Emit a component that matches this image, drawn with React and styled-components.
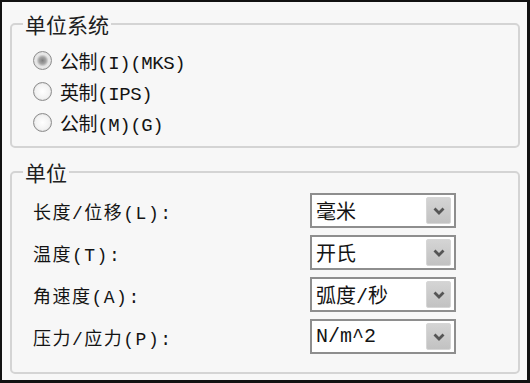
import React from "react";
import styled, { createGlobalStyle } from "styled-components";

const GlobalStyle = createGlobalStyle`
  html, body {
    margin: 0;
    padding: 0;
    background: #ffffff;
  }
`;

const Window = styled.div`
  box-sizing: border-box;
  width: 530px;
  height: 383px;
  border-style: solid;
  border-color: #111;
  border-width: 2px 3px 3px 2px;
  background: #f7f7f7;
  padding: 8px 7px 0 8px;
  display: flex;
  flex-direction: column;
  gap: 10px;
  font-family: "Liberation Mono", "Noto Sans CJK SC", monospace;
  color: #141414;
`;

const Group = styled.fieldset`
  box-sizing: border-box;
  margin: 0;
  height: ${(p) => p.$height}px;
  border: 2px solid #d4d4d4;
  border-radius: 5px;
  padding: ${(p) => p.$padTop}px 20px 0 21px;
  min-width: 0;
`;

const Legend = styled.legend`
  margin-left: -10px;
  padding: 0 2px;
  height: 28px;
  line-height: 28px;
  font-family: "Noto Sans CJK SC", sans-serif;
  font-size: 21px;
  color: #202020;
`;

const RadioRow = styled.label`
  display: flex;
  align-items: center;
  height: 31px;
  gap: 8px;
  font-size: 19px;
  letter-spacing: -0.4px;
`;

const RadioDot = styled.span`
  box-sizing: border-box;
  width: 19px;
  height: 19px;
  border-radius: 50%;
  border: 1.5px solid #8d8d8d;
  background: ${(p) =>
    p.$checked
      ? "radial-gradient(circle, #7e7e7e 0, #a4a4a4 3.5px, #e4e4e4 6px, #f4f4f4 100%)"
      : "radial-gradient(circle, #ffffff 0, #f2f2f2 60%, #dcdcdc 100%)"};
  box-shadow: inset 0 0 1px #c0c0c0;
`;

const UnitGrid = styled.div`
  display: grid;
  grid-template-columns: 277px 146px;
  grid-auto-rows: 35px;
  row-gap: 7px;
  align-items: center;
`;

const FieldLabel = styled.span`
  font-size: 18px;
  letter-spacing: 1.5px;
  white-space: nowrap;
`;

const Select = styled.div`
  box-sizing: border-box;
  height: 35px;
  border: 2px solid #8e8e8e;
  background: #ffffff;
  display: flex;
  align-items: center;
  justify-content: space-between;
  padding: 0 3px 0 4px;
  font-size: 20px;
`;

const SelectValue = styled.span`
  white-space: nowrap;
`;

const DropButton = styled.span`
  box-sizing: border-box;
  width: 25px;
  height: 27px;
  border: 1px solid #d6d6d6;
  border-radius: 2px;
  background: linear-gradient(#d4d4d4, #c2c2c2);
  display: flex;
  align-items: center;
  justify-content: center;
`;

const Chevron = () => (
  <svg width="12" height="8" viewBox="0 0 12 8">
    <path d="M1.5 1.5 L6 6 L10.5 1.5" fill="none" stroke="#555" strokeWidth="2.8" />
  </svg>
);

const systems = [
  { text: "公制(I)(MKS)", checked: true },
  { text: "英制(IPS)" },
  { text: "公制(M)(G)" },
];

const units = [
  { label: "长度/位移(L):", value: "毫米" },
  { label: "温度(T):", value: "开氏" },
  { label: "角速度(A):", value: "弧度/秒" },
  { label: "压力/应力(P):", value: "N/m^2" },
];

const App = () => (
  <>
    <GlobalStyle />
    <Window>
      <Group $height={138} $padTop={7}>
        <Legend>单位系统</Legend>
        {systems.map((s) => (
          <RadioRow key={s.text}>
            <RadioDot $checked={s.checked} />
            {s.text}
          </RadioRow>
        ))}
      </Group>
      <Group $height={216} $padTop={7}>
        <Legend>单位</Legend>
        <UnitGrid>
          {units.map((u) => (
            <React.Fragment key={u.label}>
              <FieldLabel>{u.label}</FieldLabel>
              <Select>
                <SelectValue>{u.value}</SelectValue>
                <DropButton>
                  <Chevron />
                </DropButton>
              </Select>
            </React.Fragment>
          ))}
        </UnitGrid>
      </Group>
    </Window>
  </>
);

export default App;
